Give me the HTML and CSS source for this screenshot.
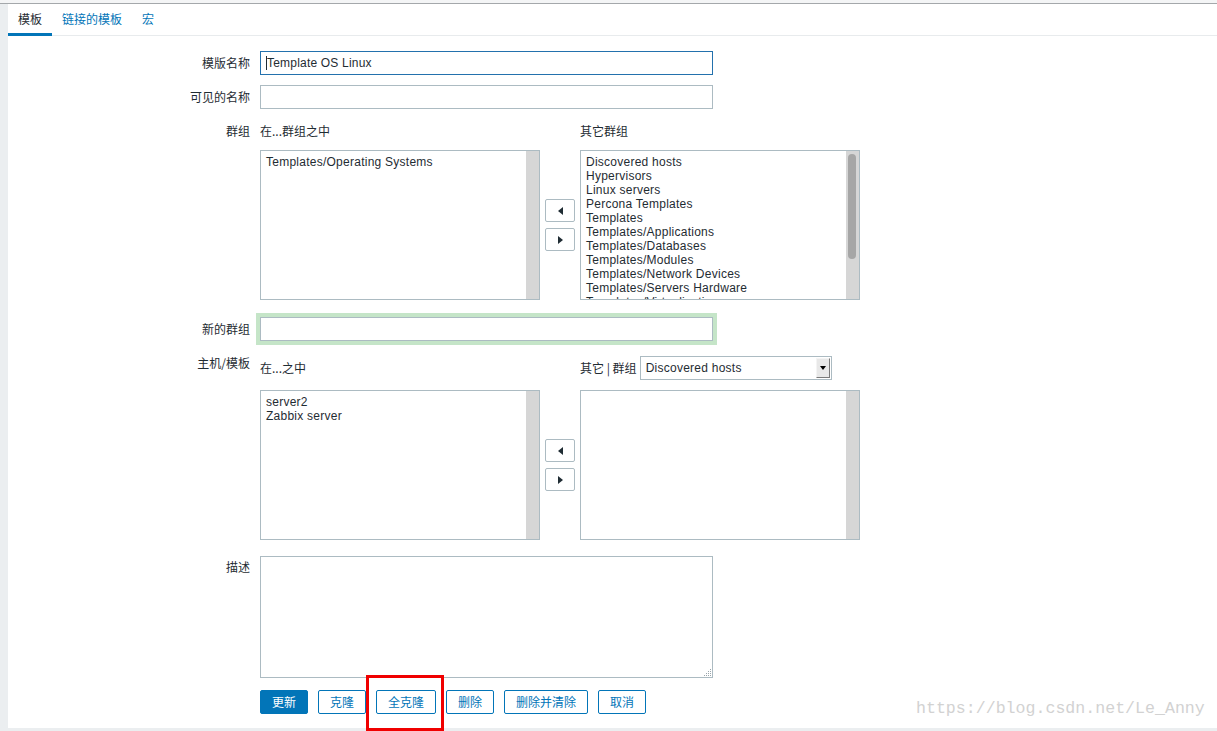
FILE: index.html
```html
<!DOCTYPE html>
<html lang="zh">
<head>
<meta charset="utf-8">
<title>模板</title>
<link rel="stylesheet" href="styles.css">
</head>
<body>
<div class="topline"></div>
<div class="page">
  <div class="panel">
    <div class="tabs">
      <span class="tab active">模板</span>
      <span class="tab">链接的模板</span>
      <span class="tab">宏</span>
    </div>
    <div class="form">
      <div class="row r1">
        <div class="label">模版名称</div>
        <div class="field"><div class="input focus"><span class="caret"></span>Template OS Linux</div></div>
      </div>
      <div class="row r2">
        <div class="label">可见的名称</div>
        <div class="field"><div class="input"></div></div>
      </div>
      <div class="row r3">
        <div class="label lab-groups">群组</div>
        <div class="field">
          <div class="twin">
            <div class="twin-head">在...群组之中</div>
            <div></div>
            <div class="twin-head">其它群组</div>
            <div class="listbox">
              <div class="items">
                <div>Templates/Operating Systems</div>
              </div>
              <div class="sbar"></div>
            </div>
            <div class="movers">
              <div class="mv"><span class="tri-left"></span></div>
              <div class="mv"><span class="tri-right"></span></div>
            </div>
            <div class="listbox">
              <div class="items">
                <div>Discovered hosts</div>
                <div>Hypervisors</div>
                <div>Linux servers</div>
                <div>Percona Templates</div>
                <div>Templates</div>
                <div>Templates/Applications</div>
                <div>Templates/Databases</div>
                <div>Templates/Modules</div>
                <div>Templates/Network Devices</div>
                <div>Templates/Servers Hardware</div>
                <div>Templates/Virtualization</div>
              </div>
              <div class="sbar"><div class="thumb"></div></div>
            </div>
          </div>
        </div>
      </div>
      <div class="row r4">
        <div class="label">新的群组</div>
        <div class="field"><div class="input glow"></div></div>
      </div>
      <div class="row r5">
        <div class="label lab-hosts">主机/模板</div>
        <div class="field">
          <div class="twin">
            <div class="twin-head">在...之中</div>
            <div></div>
            <div class="twin-head other"><span class="other-text">其它 | 群组</span><div class="select"><span class="sel-text">Discovered hosts</span><span class="sel-btn"><span class="tri-down"></span></span></div></div>
            <div class="listbox">
              <div class="items">
                <div>server2</div>
                <div>Zabbix server</div>
              </div>
              <div class="sbar"></div>
            </div>
            <div class="movers">
              <div class="mv"><span class="tri-left"></span></div>
              <div class="mv"><span class="tri-right"></span></div>
            </div>
            <div class="listbox">
              <div class="items"></div>
              <div class="sbar"></div>
            </div>
          </div>
        </div>
      </div>
      <div class="row r6">
        <div class="label lab-desc">描述</div>
        <div class="field">
          <div class="textarea">
            <svg class="grip" width="9" height="9" viewBox="0 0 9 9">
              <g fill="#9aa5ab">
                <rect x="7" y="1" width="1" height="1"/>
                <rect x="5" y="3" width="1" height="1"/><rect x="7" y="3" width="1" height="1"/>
                <rect x="3" y="5" width="1" height="1"/><rect x="5" y="5" width="1" height="1"/><rect x="7" y="5" width="1" height="1"/>
                <rect x="1" y="7" width="1" height="1"/><rect x="3" y="7" width="1" height="1"/><rect x="5" y="7" width="1" height="1"/><rect x="7" y="7" width="1" height="1"/>
              </g>
            </svg>
          </div>
        </div>
      </div>
      <div class="row r7">
        <div class="label"></div>
        <div class="field buttons">
          <span class="btn primary">更新</span>
          <span class="btn">克隆</span>
          <span class="btn">全克隆</span>
          <span class="btn">删除</span>
          <span class="btn">删除并清除</span>
          <span class="btn">取消</span>
        </div>
      </div>
    </div>
  </div>
</div>
<div class="redbox"></div>
<div class="watermark">https://blog.csdn.net/Le_Anny</div>
</body>
</html>
```

FILE: styles.css
```css
html, body {
  margin: 0;
  padding: 0;
}
body {
  background: #ebeef0;
  font-family: "Liberation Sans", Arial, "Noto Sans CJK SC", sans-serif;
  font-size: 12px;
  color: #1f2c33;
  width: 1217px;
  height: 731px;
  overflow: hidden;
  position: relative;
}
.topline {
  height: 3px;
  background: #f4f5f6;
  border-bottom: 1px solid #a4a8ab;
}
.page {
  padding-left: 8px;
}
.panel {
  background: #fff;
  height: 724px;
}
.tabs {
  display: flex;
  height: 32px;
  box-shadow: inset 0 -1px 0 #e8ebed;
}
.tab {
  box-sizing: border-box;
  height: 32px;
  line-height: 29px;
  padding: 0 10px;
  color: #0275b8;
  border-bottom: 3px solid transparent;
  font-family: "Noto Sans CJK SC", sans-serif;
}
.tab.active {
  color: #1f2c33;
  border-bottom-color: #0275b8;
}
.form {
  padding-top: 15px;
}
.row {
  display: grid;
  grid-template-columns: 242px 1fr;
  column-gap: 10px;
}
.label {
  text-align: right;
  font-family: "Noto Sans CJK SC", sans-serif;
  line-height: 24px;
  color: #1f2c33;
}
.r2 { margin-top: 10px; }
.r3 { margin-top: 10px; }
.r4 { margin-top: 17px; }
.r5 { margin-top: 15px; }
.r6 { margin-top: 16px; }
.r7 { margin-top: 12px; }
.lab-groups { line-height: 14px; padding-top: 5px; }
.lab-hosts { line-height: 14px; padding-top: 0; }
.lab-desc { line-height: 14px; padding-top: 4px; }

.input {
  box-sizing: border-box;
  width: 453px;
  height: 24px;
  border: 1px solid #acbbc2;
  line-height: 22px;
  padding: 0 5px;
  background: #fff;
  letter-spacing: 0.2px;
}
.input.focus {
  border-color: #2371ad;
}
.caret {
  display: inline-block;
  width: 1px;
  height: 14px;
  background: #1f2c33;
  vertical-align: -3px;
}
.input.glow {
  box-shadow: 0 0 0 4px #c5e5c8;
  border-radius: 0;
}
.twin {
  display: grid;
  grid-template-columns: 280px 40px 280px;
}
.twin-head {
  height: 24px;
  line-height: 24px;
  font-family: "Noto Sans CJK SC", sans-serif;
  margin-bottom: 7px;
}
.r5 .twin-head {
  margin-bottom: 10px;
}
.twin-head.other {
  display: flex;
  align-items: center;
}
.other-text {
  line-height: 24px;
}
.select {
  box-sizing: border-box;
  margin-left: 3px;
  width: 192px;
  height: 24px;
  border: 1px solid #acbbc2;
  display: flex;
  font-family: "Liberation Sans", Arial, sans-serif;
  background: #fff;
}
.sel-text {
  flex: 1;
  line-height: 22px;
  padding-left: 5px;
  letter-spacing: 0.25px;
}
.sel-btn {
  box-sizing: border-box;
  width: 14px;
  height: 20px;
  margin: 1px 1px 1px 0;
  background: #e8e8e8;
  border-top: 1px solid #f4f4f4;
  border-left: 1px solid #f4f4f4;
  border-right: 1px solid #7a7a7a;
  border-bottom: 1px solid #7a7a7a;
  display: flex;
  align-items: center;
  justify-content: center;
}
.tri-down {
  width: 0;
  height: 0;
  border-left: 3px solid transparent;
  border-right: 3px solid transparent;
  border-top: 4px solid #000;
}
.listbox {
  box-sizing: border-box;
  height: 150px;
  border: 1px solid #acbbc2;
  display: flex;
  overflow: hidden;
}
.items {
  flex: 1;
  padding: 4px 5px;
  line-height: 14px;
  overflow: hidden;
  letter-spacing: 0.25px;
  white-space: nowrap;
}
.sbar {
  width: 13px;
  background: #d6d6d6;
  flex: none;
  padding-top: 3px;
  box-sizing: border-box;
}
.thumb {
  width: 8px;
  height: 105px;
  margin-left: 2px;
  border-radius: 4px;
  background: #a6a6a6;
}
.movers {
  display: flex;
  flex-direction: column;
  align-items: center;
  justify-content: center;
  gap: 6px;
}
.mv {
  box-sizing: border-box;
  width: 30px;
  height: 23px;
  border: 1px solid #acbbc2;
  border-radius: 2px;
  display: flex;
  align-items: center;
  justify-content: center;
  background: #fff;
}
.tri-left {
  width: 0;
  height: 0;
  border-top: 4px solid transparent;
  border-bottom: 4px solid transparent;
  border-right: 5px solid #1f2c33;
}
.tri-right {
  width: 0;
  height: 0;
  border-top: 4px solid transparent;
  border-bottom: 4px solid transparent;
  border-left: 5px solid #1f2c33;
}
.textarea {
  box-sizing: border-box;
  width: 453px;
  height: 122px;
  border: 1px solid #acbbc2;
  position: relative;
}
.grip {
  position: absolute;
  right: 0;
  bottom: 0;
}
.buttons {
  display: flex;
  gap: 10px;
}
.btn {
  box-sizing: border-box;
  height: 24px;
  line-height: 22px;
  padding: 0 11px;
  border: 1px solid #0275b8;
  border-radius: 2px;
  color: #0275b8;
  background: #fff;
  font-family: "Noto Sans CJK SC", sans-serif;
}
.btn.primary {
  background: #0275b8;
  color: #fff;
}
.redbox {
  position: absolute;
  left: 366px;
  top: 675px;
  width: 78px;
  height: 56px;
  box-sizing: border-box;
  border: 3px solid #f00000;
}
.watermark {
  position: absolute;
  left: 916px;
  top: 699px;
  font-family: "Liberation Mono", "Courier New", monospace;
  font-size: 16.6px;
  color: #d2d2d2;
  line-height: 20px;
  white-space: nowrap;
}
```
